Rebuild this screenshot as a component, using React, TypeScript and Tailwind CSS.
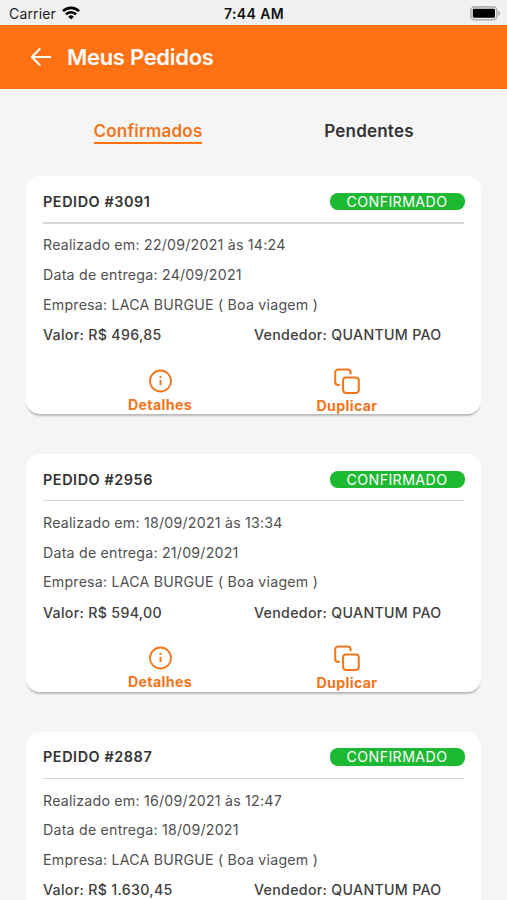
type Order = {
  id: number;
  placed: string;
  delivery: string;
  total: string;
};

const orders: Order[] = [
  { id: 3091, placed: "22/09/2021 às 14:24", delivery: "24/09/2021", total: "496,85" },
  { id: 2956, placed: "18/09/2021 às 13:34", delivery: "21/09/2021", total: "594,00" },
  { id: 2887, placed: "16/09/2021 às 12:47", delivery: "18/09/2021", total: "1.630,45" },
];

function WifiIcon() {
  return (
    <svg width="18" height="14" viewBox="0 0 18 14" fill="none" stroke="#000" strokeWidth="2.6">
      <path d="M1 5.2a11.3 11.3 0 0 1 16 0" />
      <path d="M3.9 8.3a7.2 7.2 0 0 1 10.2 0" />
      <path d="M9 13.6 6.2 10.7a4 4 0 0 1 5.6 0Z" fill="#000" stroke="none" />
    </svg>
  );
}

function BatteryIcon() {
  return (
    <svg width="31" height="15" viewBox="0 0 31 15" fill="none">
      <rect x="0.9" y="0.9" width="26" height="12.8" rx="3.8" stroke="#b0b0b0" strokeWidth="1.6" fill="#f1f1f1" />
      <rect x="2.8" y="2.8" width="22.2" height="9" rx="1.4" fill="#000" />
      <path d="M28.3 5v4.8c1.2-.4 2-1.3 2-2.4S29.5 5.4 28.3 5Z" fill="#b0b0b0" />
    </svg>
  );
}

function BackIcon() {
  return (
    <svg width="22" height="20" viewBox="0 0 22 20" fill="none" stroke="#fff" strokeWidth="2" strokeLinecap="round" strokeLinejoin="round">
      <path d="M20.3 10H1.8M9.7 2 1.8 10l7.9 8" />
    </svg>
  );
}

function InfoIcon() {
  return (
    <svg width="24" height="24" viewBox="0 0 24 24" fill="none" stroke="#f2751b" strokeWidth="1.8">
      <circle cx="12.5" cy="12" r="10.5" />
      <path d="M12.5 10.8v5.4" strokeWidth="1.9" />
      <path d="M12.5 7v1.9" strokeWidth="1.9" />
    </svg>
  );
}

function CopyIcon() {
  return (
    <svg width="27" height="27" viewBox="0 0 27 27" fill="none" stroke="#f2751b" strokeWidth="2" strokeLinecap="round">
      <rect x="9.1" y="9.5" width="15.7" height="15.4" rx="2.8" />
      <path d="M5 16.9H4.2a3 3 0 0 1-3-3V4.5a3 3 0 0 1 3-3h9.4a3 3 0 0 1 3 3v.9" />
    </svg>
  );
}

function OrderCard({ order }: { order: Order }) {
  return (
    <article className="h-[238.3px] shrink-0 rounded-[14px] bg-white px-[17px] pt-[16.5px] text-[14.2px] text-[#505050] shadow-[0_3px_2px_-1px_rgba(0,0,0,0.25)]">
      <div className="flex h-[18px] items-center justify-between">
        <h2 className="text-[14.4px] font-semibold tracking-[0.57px] text-[#333]">PEDIDO #{order.id}</h2>
        <span className="-mr-[0.5px] flex h-[17.5px] w-[135px] items-center justify-center rounded-[8px] bg-[#1eb932] text-[14.2px] tracking-[0.4px] text-white">
          CONFIRMADO
        </span>
      </div>
      <div className="mt-[11.5px] h-[1.5px] bg-[#d6d6d6]" />
      <div className="mt-[6.5px] leading-[29.8px] tracking-[0.22px]">
        <p>Realizado em: {order.placed}</p>
        <p>Data de entrega: {order.delivery}</p>
        <p>Empresa: LACA BURGUE ( Boa viagem )</p>
        <div className="flex pt-[0.5px] font-medium tracking-[0.31px] text-[#404040]">
          <p className="w-[211px]">Valor: R$ {order.total}</p>
          <p>Vendedor: QUANTUM PAO</p>
        </div>
      </div>
      <div className="mt-[16.5px] flex text-[14.2px] leading-[17px] font-bold text-[#f2751b]">
        <button className="flex w-[234px] flex-col items-center pt-[2.5px]">
          <InfoIcon />
          <span className="mt-[3px] tracking-[0.35px]">Detalhes</span>
        </button>
        <button className="flex w-[140px] flex-col items-center pt-[1.5px]">
          <CopyIcon />
          <span className="mt-[2px] tracking-[0.35px]">Duplicar</span>
        </button>
      </div>
    </article>
  );
}

export default function App() {
  return (
    <div className="flex h-[900px] w-[507px] flex-col overflow-hidden bg-[#f5f5f5] font-['Inter',sans-serif]">
      <div className="grid h-[25px] shrink-0 grid-cols-3 items-center bg-[#f1f1f1] pr-[6px] pl-[9px] text-[14px] text-[#222]">
        <div className="flex items-center gap-[6px] pt-[2px]">
          <span className="tracking-[0.15px]">Carrier</span>
          <span className="pb-px">
            <WifiIcon />
          </span>
        </div>
        <span className="pt-[2px] pr-[2px] text-center font-semibold tracking-[0.4px] text-[#111]">7:44 AM</span>
        <span className="flex justify-end pt-px">
          <BatteryIcon />
        </span>
      </div>
      <header className="flex h-[63.5px] shrink-0 items-center bg-[#ff7112] pl-[30px] text-white">
        <BackIcon />
        <h1 className="mt-[1.5px] ml-[15px] text-[22px] font-semibold tracking-[-0.3px]">Meus Pedidos</h1>
      </header>
      <nav className="flex h-[87.5px] shrink-0 items-start pt-[32px] pl-[40px] text-[17px] leading-[21px] font-semibold tracking-[0.2px]">
        <div className="flex w-[216px] justify-center">
          <button className="border-b-2 border-[#ff7112] text-[#f2751b]">Confirmados</button>
        </div>
        <div className="flex w-[226px] justify-center text-[#333]">
          <button>Pendentes</button>
        </div>
      </nav>
      <main className="flex flex-col gap-[39.5px] px-[26px]">
        {orders.map((order) => (
          <OrderCard key={order.id} order={order} />
        ))}
      </main>
    </div>
  );
}
